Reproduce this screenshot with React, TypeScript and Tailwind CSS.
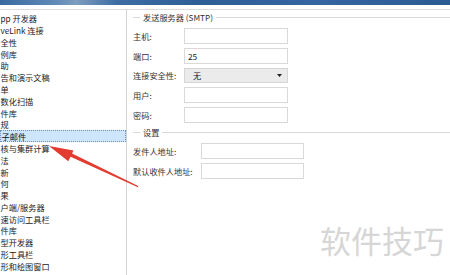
import React from "react";

const items = [
  "pp 开发器",
  "veLink 连接",
  "全性",
  "例库",
  "助",
  "告和演示文稿",
  "单",
  "数化扫描",
  "件库",
  "规",
  "子邮件",
  "核与集群计算",
  "法",
  "新",
  "何",
  "果",
  "户端/服务器",
  "速访问工具栏",
  "件库",
  "型开发器",
  "形工具栏",
  "形和绘图窗口",
];

function Header({ title }: { title: string }) {
  return (
    <div className="flex items-center h-[15px]">
      <div className="w-[7px] h-px bg-[#d9d9d9]" />
      <span className="px-[3px] whitespace-nowrap text-[#333]">{title}</span>
      <div className="flex-1 h-px bg-[#d9d9d9]" />
    </div>
  );
}

function Field({
  label,
  labelW,
  inputW,
  value,
  select,
}: {
  label: string;
  labelW: string;
  inputW: string;
  value?: string;
  select?: boolean;
}) {
  return (
    <div className="flex items-center h-[19.7px]">
      <div className={`${labelW} text-[#333] whitespace-nowrap`}>{label}</div>
      {select ? (
        <div className={`${inputW} h-[14.5px] bg-[#ebebeb] border border-[#d6d6d6] flex items-center pl-[8px] pr-[5px] justify-between`}>
          <span className="text-[#222]">{value}</span>
          <svg width="5" height="3" viewBox="0 0 5 3">
            <path d="M0 0H5L2.5 3Z" fill="#222" />
          </svg>
        </div>
      ) : (
        <div className={`${inputW} h-[16px] bg-white border border-[#d9d9d9] flex items-center pl-[3px] text-[#222]`}>
          {value}
        </div>
      )}
    </div>
  );
}

export default function App() {
  return (
    <div
      className="relative w-[450px] h-[275px] overflow-hidden bg-white text-[8.2px]"
      style={{ fontFamily: '"Noto Sans CJK SC", "Noto Sans", sans-serif' }}
    >
      <div className="h-[5px] bg-[linear-gradient(90deg,#3a6a9f_0%,#5e89b7_12%,#7d9cbf_17%,#3d6da3_26%,#2d5e96_45%,#3566a0_70%,#2b5b93_100%)]" />
      <div className="h-[4px] bg-white" />
      <div className="h-px bg-[#dcdcdc]" />
      <div className="flex h-[265px]">
        <div className="w-[127px] shrink-0 border-r border-[#d2d2d2] overflow-hidden pt-[2.4px]">
          {items.map((t, i) => (
            <div
              key={i}
              className={
                i === 10
                  ? "h-[11.8px] w-[126px] flex items-center bg-[#cde6fb] border border-dotted border-[#6f8fb5] text-[#111] whitespace-nowrap"
                  : "h-[11.8px] w-[126px] flex items-center text-[#222] whitespace-nowrap"
              }
            >
              <span className="ml-[0.5px]">{t}</span>
            </div>
          ))}
        </div>
        <div className="flex-1 pl-[6px]">
          <Header title="发送服务器 (SMTP)" />
          <div className="mt-[1.4px] flex flex-col">
            <Field label="主机:" labelW="w-[51px]" inputW="w-[104px]" />
            <Field label="端口:" labelW="w-[51px]" inputW="w-[104px]" value="25" />
            <Field label="连接安全性:" labelW="w-[51px]" inputW="w-[104px]" value="无" select />
            <Field label="用户:" labelW="w-[51px]" inputW="w-[104px]" />
            <Field label="密码:" labelW="w-[51px]" inputW="w-[104px]" />
          </div>
          <Header title="设置" />
          <div className="mt-[1.6px] flex flex-col">
            <Field label="发件人地址:" labelW="w-[68px]" inputW="w-[103px]" />
            <Field label="默认收件人地址:" labelW="w-[68px]" inputW="w-[103px]" />
          </div>
        </div>
      </div>

      <svg className="absolute left-0 top-0 pointer-events-none" width="450" height="275" viewBox="0 0 450 275">
        <polygon points="138.5,187.5 137.7,185.8 67,151 65.6,154.5" fill="#e23b30" />
        <polygon points="49,146 73.5,150.5 68.3,161.2" fill="#e23b30" />
      </svg>

      <div className="absolute left-[320px] top-[224px] text-[31px] leading-[31px] text-[#d6d6d6] whitespace-nowrap">
        软件技巧
      </div>
    </div>
  );
}
